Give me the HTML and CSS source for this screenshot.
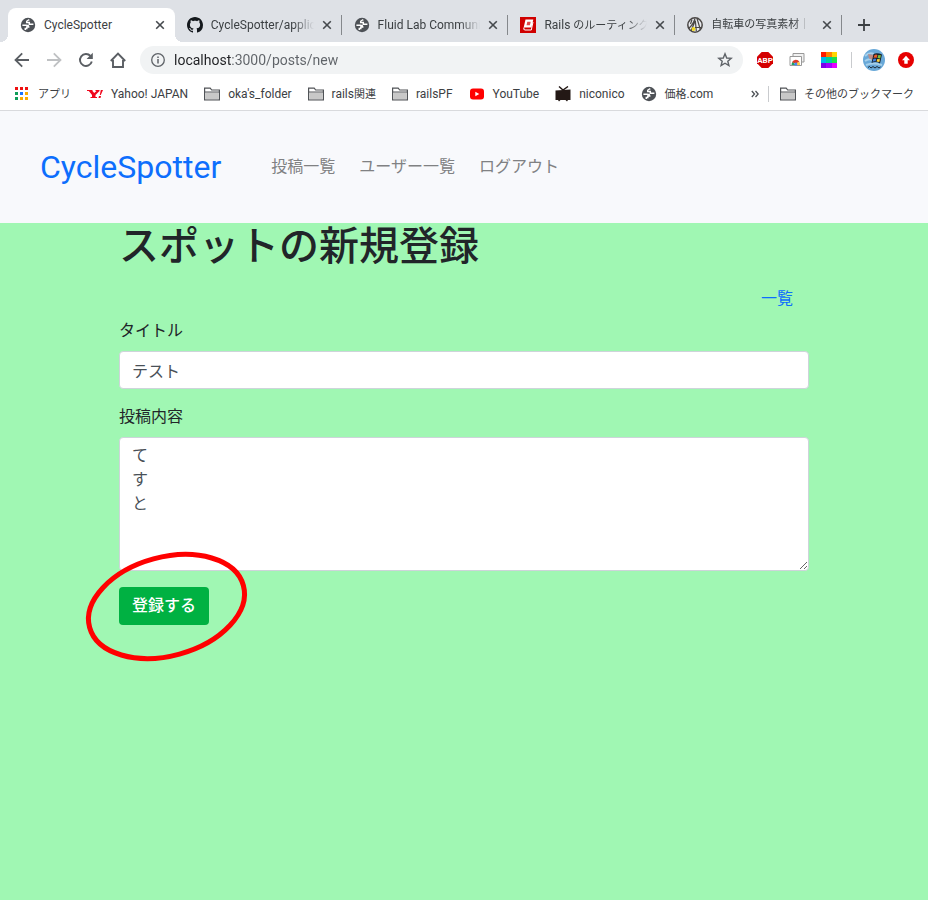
FILE: index.html
```html
<!DOCTYPE html>
<html lang="ja">
<head>
<meta charset="utf-8">
<meta name="viewport" content="width=device-width, initial-scale=1">
<title>CycleSpotter</title>
<link rel="stylesheet" href="styles.css">
</head>
<body>
<svg class="defs" aria-hidden="true">
  <symbol id="globe" viewBox="0 0 16 16">
    <circle cx="8" cy="8" r="7.200" fill="#4d5156"/>
    <path d="M2.400 8.300H6.200C7.500 8.300 8.700 8.900 8.700 10H6.800V11.600H5.300V13.100" fill="none" stroke="#fff" stroke-width="1.500"/>
    <path d="M9.300 2.700C8.600 3.200 6.700 3.300 6.700 4.500V5.600H9.300V7.300H13.400" fill="none" stroke="#fff" stroke-width="1.500"/>
  </symbol>
  <symbol id="folder" viewBox="0 0 16 16">
    <path d="M.6 13.900V2.100H6.200L7.700 4H15.400V13.900Z" fill="#fff" stroke="#505357" stroke-width="1.200"/>
    <path d="M1.200 6.500H14.800V13.300H1.200Z" fill="#c8c8c8"/>
    <path d="M.6 6H15.400" stroke="#505357"/>
  </symbol>
  <symbol id="close" viewBox="0 0 10 10">
    <path d="M1.200 1.200L8.800 8.800M8.800 1.200L1.200 8.800" stroke="#45494d" stroke-width="1.600"/>
  </symbol>
</svg>

<header class="browser">
  <div class="tabstrip">
    <div class="tab active">
      <svg class="icon"><use href="#globe"/></svg>
      <span class="tab-title">CycleSpotter</span>
      <button class="tab-close" aria-label="閉じる"><svg><use href="#close"/></svg></button>
    </div>
    <div class="tab">
      <svg class="icon" viewBox="0 0 16 16"><path fill="#15191d" d="M8 0C3.580 0 0 3.580 0 8c0 3.540 2.290 6.530 5.470 7.590.4.070.55-.17.55-.38 0-.19-.01-.82-.01-1.490-2.010.37-2.530-.49-2.690-.94-.09-.23-.48-.94-.82-1.130-.28-.15-.68-.52-.01-.53.63-.01 1.080.58 1.230.82.72 1.210 1.870.87 2.330.66.070-.52.28-.87.51-1.070-1.780-.2-3.640-.89-3.640-3.950 0-.87.31-1.590.82-2.150-.08-.2-.36-1.020.08-2.120 0 0 .67-.21 2.200.82.64-.18 1.320-.27 2-.27s1.360.09 2 .27c1.530-1.040 2.200-.82 2.200-.82.44 1.100.16 1.920.08 2.120.51.56.82 1.270.82 2.150 0 3.070-1.870 3.750-3.650 3.950.29.25.54.73.54 1.480 0 1.070-.01 1.930-.01 2.200 0 .21.15.46.55.38A8.010 8.010 0 0 0 16 8c0-4.420-3.580-8-8-8z"/></svg>
      <span class="tab-title">CycleSpotter/applic</span>
      <button class="tab-close" aria-label="閉じる"><svg><use href="#close"/></svg></button>
    </div>
    <div class="tab">
      <svg class="icon"><use href="#globe"/></svg>
      <span class="tab-title">Fluid Lab Communi</span>
      <button class="tab-close" aria-label="閉じる"><svg><use href="#close"/></svg></button>
    </div>
    <div class="tab">
      <svg class="icon" viewBox="0 0 16 16"><path fill="#d00000" d="M0 0H16V16H0Z"/><path fill="#fff" d="M5.500 2.500H13.300L11.500 10.500H3.700Z"/><path d="M4 10.500Q3 13 5 13H11.300L13 5" fill="none" stroke="#fff" stroke-width="1"/><path d="M7.300 4.700H10.700L9.900 8.300H6.500Z" fill="#e04848"/></svg>
      <span class="tab-title">Rails <span class="jp">のルーティング</span></span>
      <button class="tab-close" aria-label="閉じる"><svg><use href="#close"/></svg></button>
    </div>
    <div class="tab">
      <svg class="icon" viewBox="0 0 16 16"><circle cx="8" cy="8" r="7.200" fill="#e9ebef" stroke="#4a4745" stroke-width="1.500"/><path d="M1.500 11.500Q6 8 8 1.500M4 14L8.300 3.500L9.300 14M10 1.500L13.500 13M8 10.500H15M5 2.500L3.500 7" fill="none" stroke="#4a4745" stroke-width="1.200"/><circle cx="6.500" cy="12" r="1.900" fill="#f0d820"/></svg>
      <span class="tab-title jp">自転車の写真素材｜</span>
      <button class="tab-close" aria-label="閉じる"><svg><use href="#close"/></svg></button>
    </div>
    <button class="new-tab" aria-label="新しいタブ"><svg viewBox="0 0 12 12"><path d="M6 0V12M0 6H12" stroke="#3c4043" stroke-width="1.800"/></svg></button>
  </div>

  <div class="toolbar">
    <button class="tool" aria-label="戻る"><svg class="icon" viewBox="0 0 16 16"><path d="M15 8H2M8.200 1.300L1.500 8L8.200 14.700" fill="none" stroke="#5a5e63" stroke-width="1.800"/></svg></button>
    <button class="tool" aria-label="進む"><svg class="icon" viewBox="0 0 16 16"><path d="M1 8H14M7.800 1.300L14.500 8L7.800 14.700" fill="none" stroke="#bfc1c3" stroke-width="1.800"/></svg></button>
    <button class="tool" aria-label="再読み込み"><svg class="icon" viewBox="0 0 16 16"><path d="M13.800 9.500A6 6 0 1 1 12.500 4" fill="none" stroke="#5a5e63" stroke-width="1.900"/><path d="M14.800.8V7H8.600Z" fill="#5a5e63"/></svg></button>
    <button class="tool" aria-label="ホーム"><svg class="icon" viewBox="0 0 16 16"><path d="M.8 9L8 1.600L15.200 9M3 8V15H13V8" fill="none" stroke="#5a5e63" stroke-width="1.900"/></svg></button>
    <div class="omnibox">
      <svg class="info" viewBox="0 0 14 14"><circle cx="7" cy="7" r="6.300" fill="none" stroke="#5f6368" stroke-width="1.300"/><path d="M7 6V10.500M7 3.400V4.900" stroke="#5f6368" stroke-width="1.500"/></svg>
      <input class="url" type="text" aria-label="アドレス" value="localhost:3000/posts/new">
      <button class="star" aria-label="ブックマークに追加"><svg class="icon" viewBox="0 0 16 16"><path d="M8 1.800L9.700 6L14.200 6.300L10.800 9.200L11.900 13.600L8 11.200L4.100 13.600L5.200 9.200L1.800 6.300L6.300 6Z" fill="none" stroke="#5f6368" stroke-width="1.400"/></svg></button>
    </div>
    <button class="tool" aria-label="Adblock Plus"><svg class="icon" viewBox="0 0 16 16"><path d="M4.700 0H11.300L16 4.700V11.300L11.300 16H4.700L0 11.300V4.700Z" fill="#d40000"/><text class="abp" x="8" y="10.800" text-anchor="middle">ABP</text></svg></button>
    <button class="tool" aria-label="拡張機能"><svg class="icon" viewBox="0 0 16 16"><path d="M4 1.500H15V10H4Z" fill="#f1f1f1" stroke="#999"/><path d="M1 4.500H12.500V13.500H1Z" fill="#fff" stroke="#999"/><path d="M2.500 13A4.500 4.500 0 0 1 4 9.500L6.500 13Z" fill="#1fa463"/><path d="M3 10.200A4.200 4.200 0 0 1 10.500 10L6.700 11.500Z" fill="#dd3b29"/><path d="M10.500 10A5 5 0 0 1 11 13H7.500V11Z" fill="#ffcd40"/><circle cx="6.800" cy="12" r="1.500" fill="#4587f4"/></svg></button>
    <button class="tool" aria-label="カラーピッカー"><svg class="icon" viewBox="0 0 16 16" shape-rendering="crispEdges"><path fill="#ff1a00" d="M0 0H5V5H0Z"/><path fill="#ff8000" d="M5 0H11V5H5Z"/><path fill="#ffd500" d="M11 0H16V5H11Z"/><path fill="#00b7eb" d="M0 5H5V11H0Z"/><path fill="#00cf9a" d="M5 5H11V11H5Z"/><path fill="#20df48" d="M11 5H16V11H11Z"/><path fill="#7b00e8" d="M0 11H5V16H0Z"/><path fill="#a000ff" d="M5 11H11V16H5Z"/><path fill="#e500ff" d="M11 11H16V16H11Z"/></svg></button>
    <span class="divider toolbar-divider"></span>
    <button class="tool" aria-label="プロフィール"><svg class="avatar" viewBox="0 0 22 22"><circle cx="11" cy="11" r="11" fill="#68a8d8"/><path d="M2 7Q6 3 11 5M2 12Q6 9 9 11M3 16Q10 13 19 16" fill="none" stroke="#a5cfea" stroke-width="2"/><path d="M5 5L11 6L9.500 11L6 9.500Z" fill="#b98e8a"/><path d="M10.500 5Q14 3.500 19 5.500L17 14.500Q13 12 8.500 14Z" fill="#16202b"/><path d="M11.500 6Q13 5 14.500 6L13.500 9Q12 8 10.500 9Z" fill="#ef5a28"/><path d="M15.300 6L18 6.300L17.200 9.500L14.500 9Z" fill="#7ac043"/><path d="M10.300 10Q12 9 13.300 10L12.500 12.500Q11 12 9.500 13Z" fill="#3d7edb"/><path d="M14.300 10L17 10.300L16.300 13L13.500 12.500Z" fill="#ffd23c"/><path d="M5 18.500L6.500 17.500L8 19L10 17.500L12 19L14 17.500L16 19L17.500 18" fill="none" stroke="#1b2935"/></svg></button>
    <button class="tool" aria-label="更新"><svg class="icon" viewBox="0 0 16 16"><circle cx="8" cy="8" r="8" fill="#e60000"/><path d="M8 3.800L12 8.300H9.700V11.800H6.300V8.300H4Z" fill="#fff"/></svg></button>
  </div>

  <nav class="bookmarks" aria-label="ブックマーク">
    <a href="#"><svg class="icon" viewBox="0 0 16 16" shape-rendering="crispEdges"><path fill="#e11" d="M1 1H4V4H1ZM6 1H9V4H6ZM11 1H14V4H11Z"/><path fill="#0f9d58" d="M1 6H4V9H1ZM1 11H4V14H1Z"/><path fill="#1a73ff" d="M6 6H9V9H6Z"/><path fill="#fbab00" d="M11 6H14V9H11ZM6 11H9V14H6ZM11 11H14V14H11Z"/></svg><span><span class="jp">アプリ</span></span></a>
    <a href="#"><svg class="icon" viewBox="0 0 16 16"><path d="M0 4H5.500V5L7.200 7L9.500 5H8.500V4H12.500V5L8.500 9V11H10V12H3.500V11H5V9L1.800 5H0ZM13.800 4H16L13.800 9H12.800ZM12 10H14L13.500 12H11.500Z" fill="#f0061c"/></svg>Yahoo! JAPAN</a>
    <a href="#"><svg class="icon"><use href="#folder"/></svg>oka's_folder</a>
    <a href="#"><svg class="icon"><use href="#folder"/></svg><span>rails<span class="jp">関連</span></span></a>
    <a href="#"><svg class="icon"><use href="#folder"/></svg>railsPF</a>
    <a href="#"><svg class="icon" viewBox="0 0 16 16"><rect x="1" y="2.500" width="14" height="11" rx="3" fill="#f00"/><path d="M6.300 5.700L10.300 8L6.300 10.300Z" fill="#fff"/></svg>YouTube</a>
    <a href="#"><svg class="icon" viewBox="0 0 16 16"><path d="M4 .5L8 4L13 .5" fill="none" stroke="#231815" stroke-width="1.400"/><path d="M.5 4.500L15.500 3.500V14H13L12 15.500L10.500 14H5.500L4 15.500L3 14H.5Z" fill="#231815"/></svg>niconico</a>
    <a href="#"><svg class="icon"><use href="#globe"/></svg><span><span class="jp">価格</span>.com</span></a>
    <button class="more" aria-label="その他"><svg viewBox="0 0 8 8"><path d="M.8 1L3.500 4L.8 7M4.500 1L7.200 4L4.500 7" fill="none" stroke="#4d5156" stroke-width="1.300"/></svg></button>
    <span class="divider"></span>
    <a href="#"><svg class="icon"><use href="#folder"/></svg><span><span class="jp">その他のブックマーク</span></span></a>
  </nav>
</header>

<nav class="navbar">
  <a class="brand" href="#">CycleSpotter</a>
  <a href="#">投稿一覧</a>
  <a href="#">ユーザー一覧</a>
  <a href="#">ログアウト</a>
</nav>

<main class="container">
  <h1>スポットの新規登録</h1>
  <div class="list-link"><a href="#">一覧</a></div>
  <form>
    <div class="form-group">
      <label for="title">タイトル</label>
      <input id="title" class="form-control" type="text" value="テスト">
    </div>
    <div class="form-group">
      <label for="body">投稿内容</label>
      <textarea id="body" class="form-control" rows="5">て
す
と</textarea>
    </div>
    <div class="submit">
      <button class="btn" type="button">登録する</button>
      <svg class="mark" viewBox="80 546 180 122" aria-hidden="true"><ellipse cx="166.500" cy="606.500" rx="79.700" ry="49.300" transform="rotate(-15.300 166.500 606.500)" fill="none" stroke="#f00" stroke-width="5"/></svg>
    </div>
  </form>
</main>
</body>
</html>
```

FILE: styles.css
```css
*, *::before, *::after { box-sizing: border-box; }

body {
  margin: 0;
  min-height: 100vh;
  background: #a0f7b3;
  color: #212529;
  font: 16px/24px Roboto, "Noto Sans CJK JP", sans-serif;
}

a { color: #0d6efd; text-decoration: none; }

button {
  border: 0;
  padding: 0;
  background: none;
  font: inherit;
  display: flex;
  align-items: center;
  justify-content: center;
}

svg { display: block; flex: none; }
.defs { position: absolute; width: 0; height: 0; }
.icon { width: 16px; height: 16px; }
.jp { font-size: 11px; }

/* Browser chrome */
.browser {
  background: #fff;
  border-bottom: 1px solid #d9dadd;
  font-size: 12px;
  line-height: 16px;
  color: #3c4043;
}

.tabstrip {
  display: flex;
  height: 42px;
  padding: 8px 0 0 8px;
  background: #dee1e6;
}

.tab {
  flex: 1;
  min-width: 0;
  display: flex;
  align-items: center;
  gap: 8px;
  padding: 0 10px 0 12px;
  position: relative;
}

.tab:not(.active)::after {
  content: "";
  position: absolute;
  right: 0;
  top: 7px;
  width: 1px;
  height: 20px;
  background: #85888c;
}

.tab.active { background: #fff; border-radius: 8px 8px 0 0; }

.tab.active::before,
.tab.active::after {
  content: "";
  position: absolute;
  bottom: 0;
  width: 8px;
  height: 8px;
}
.tab.active::before { left: -8px; background: radial-gradient(circle at 0 0, #dee1e6 8px, #fff 8px); }
.tab.active::after { right: -8px; background: radial-gradient(circle at 100% 0, #dee1e6 8px, #fff 8px); }

.tab-title {
  flex: 1;
  min-width: 0;
  overflow: hidden;
  white-space: nowrap;
}
.tab:not(.active) .tab-title {
  -webkit-mask-image: linear-gradient(to right, #000 80%, transparent);
  mask-image: linear-gradient(to right, #000 80%, transparent);
}
.tab-close svg { width: 10px; height: 10px; }

.new-tab { width: 44px; margin-right: 42px; }
.new-tab svg { width: 12px; height: 12px; }

.toolbar {
  display: flex;
  align-items: center;
  height: 36px;
  padding: 0 6px;
}
.tool { width: 32px; height: 28px; }
.avatar { width: 22px; height: 22px; }
.abp { font: bold 8px Roboto, sans-serif; fill: #fff; }

.omnibox {
  flex: 1;
  min-width: 0;
  display: flex;
  align-items: center;
  height: 28px;
  margin: 0 6px;
  padding: 0 10px 0 11px;
  border-radius: 14px;
  background: #f1f3f4;
}
.info { width: 14px; height: 14px; }
.url {
  flex: 1;
  min-width: 0;
  height: 20px;
  margin-left: 9px;
  padding: 0;
  border: 0;
  outline: 0;
  font: 14px/20px Roboto, sans-serif;
  color: transparent;
  background: linear-gradient(to right, #202124 58px, #5f6368 58px);
  -webkit-background-clip: text;
  background-clip: text;
}

.divider { flex: none; width: 1px; height: 16px; background: #c9cbce; }
.toolbar-divider { margin: 0 6px; }

.bookmarks {
  display: flex;
  align-items: center;
  gap: 16px;
  height: 32px;
  padding: 0 14px;
  white-space: nowrap;
}
.bookmarks a { display: flex; align-items: center; gap: 8px; color: inherit; }
.more { margin-left: auto; margin-right: -7px; }
.more svg { width: 8px; height: 8px; }
.bookmarks .divider + a { margin-left: -5px; }

/* Page */
.navbar {
  display: flex;
  align-items: center;
  gap: 24px;
  height: 112px;
  padding: 0 40px;
  background: #f8f9fc;
}
.navbar a { color: #808183; }
.navbar .brand {
  margin-right: 26px;
  font-size: 32px;
  line-height: 48px;
  color: #0d6efd;
}

.container {
  max-width: 720px;
  margin: 0 auto;
  padding: 0 15px;
}

h1 {
  margin: 0 0 16px;
  font-size: 40px;
  font-weight: 500;
  line-height: 48px;
}

.list-link { padding-right: 16px; margin-bottom: 8px; text-align: right; }
.form-group { margin-bottom: 16px; }
label { display: block; margin-bottom: 8px; }

.form-control {
  display: block;
  width: 100%;
  padding: 6px 12px;
  border: 1px solid #ced4da;
  border-radius: 4px;
  background: #fff;
  color: #495057;
  font: inherit;
}
input.form-control { height: 38px; }
textarea.form-control { resize: vertical; }

.submit { position: relative; }
.btn {
  height: 38px;
  padding: 0 13px;
  border-radius: 4px;
  background: #00b142;
  color: #fff;
  font-weight: 500;
}
.mark {
  position: absolute;
  left: -39px;
  top: -41px;
  width: 180px;
  height: 122px;
  pointer-events: none;
}
```
